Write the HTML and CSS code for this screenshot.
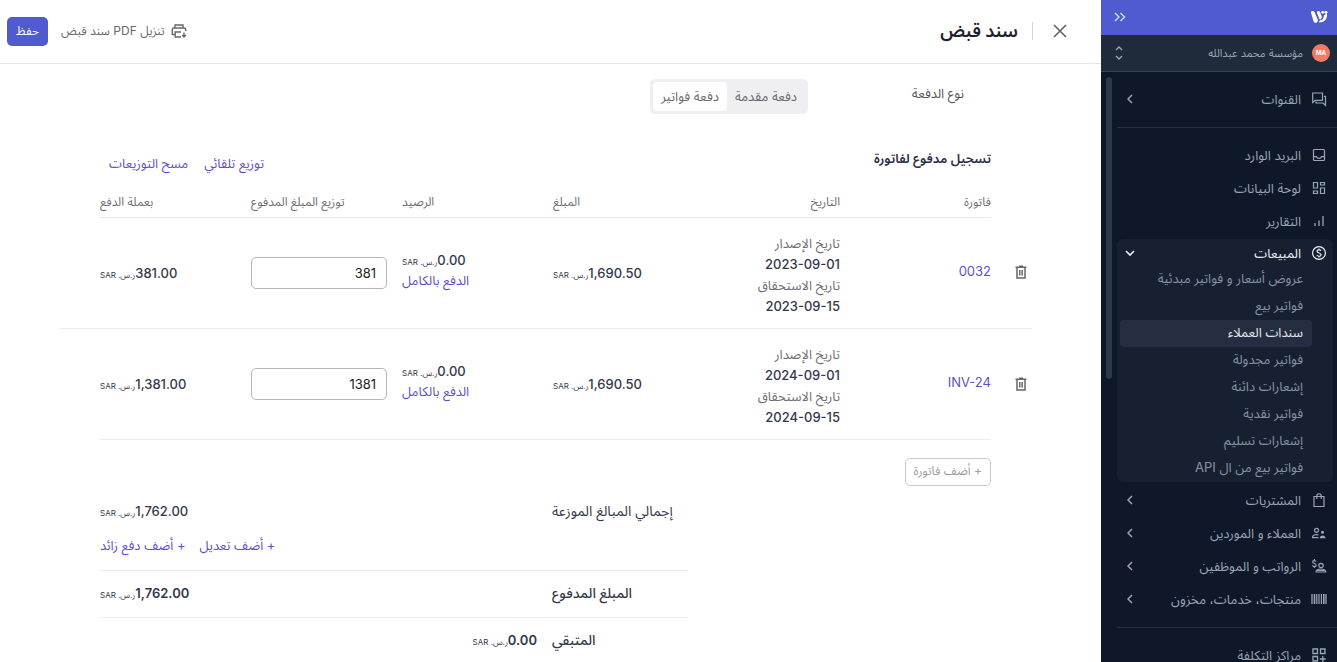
FILE: index.html
```html
<!DOCTYPE html>
<html lang="ar" dir="rtl">
<head>
<meta charset="utf-8">
<meta name="viewport" content="width=device-width, initial-scale=1">
<title>سند قبض</title>
<link rel="stylesheet" href="styles.css">
</head>
<body>
<div class="app">
  <aside class="sidebar">
    <div class="brand">
      <svg class="logo" viewBox="0 0 18 14" width="18" height="14" aria-label="شعار"><path fill="#fff" d="M.8 2.200C1.500.6 3.800.5 4.600 2.200L7.600 9.200C8.200 11 7.300 12.800 5.600 12.900C4.400 12.900 3.900 12 3.500 11zM6.800 2.200C7.500.6 9.400.6 10.100 2.200L12 7.200L10.400 9.400C9.700 9.400 9.400 9 9.200 8.400zM8.600 11.900L10.200 10.200C13 10.300 13.900 7.500 13.800 5.500L17 3.200C17.600 8.500 14.500 13.400 8.600 11.900z"/><circle cx="12.700" cy="2.300" r="1.400" fill="#fff"/><circle cx="15.900" cy="2.300" r="1.500" fill="#fff"/></svg>
      <button class="icon-btn" type="button" aria-label="طي القائمة"><svg class="ic" viewBox="0 0 12 10" width="12" height="10"><path d="M1 1l4 4-4 4M6.500 1l4 4-4 4" stroke-width="1.400"/></svg></button>
    </div>
    <button class="company" type="button">
      <span class="avatar">MA</span>
      <span class="company-name">مؤسسة محمد عبدالله</span>
      <svg class="ic" viewBox="0 0 8 14" width="8" height="14"><path d="M1 4l3-3 3 3M1 10l3 3 3-3" stroke-width="1.400"/></svg>
    </button>
    <nav class="nav">
      <span class="scroll-thumb"></span>
      <a class="item" href="#"><svg class="ic" viewBox="0 0 16 16" width="16" height="16"><path d="M1.700 2h9.800v7.300H4.200L1.700 11.500zM13 5.300h1.500v9L12 12H5v-1.500"/></svg><span>القنوات</span><svg class="ic chev" viewBox="0 0 6 10" width="6" height="10"><path d="M5 1L1 5l4 4"/></svg></a>
      <hr>
      <a class="item" href="#"><svg class="ic" viewBox="0 0 16 16" width="16" height="16"><rect x="2.500" y="2.500" width="11" height="11" rx="1"/><path d="M2.500 9.700h3c.5 2.300 4.500 2.300 5 0h3"/></svg><span>البريد الوارد</span></a>
      <a class="item" href="#"><svg class="ic" viewBox="0 0 16 16" width="16" height="16"><path d="M2.500 2.500h4v5.500h-4zM9.500 2.500h4v2.500h-4zM2.500 11h4v2.500h-4zM9.500 8h4v5.500h-4z"/></svg><span>لوحة البيانات</span></a>
      <a class="item" href="#"><svg class="ic" viewBox="0 0 16 16" width="16" height="16"><path d="M4 10v3M8 7.500V13M12 3v10" stroke-width="1.300"/></svg><span>التقارير</span></a>
      <div class="group">
        <a class="item open" href="#"><svg class="ic" viewBox="0 0 16 16" width="16" height="16"><circle cx="8" cy="8" r="6.400"/><path d="M10 5.900C9.500 4.400 6 4.400 6 6.300c0 2.200 4.100 1.200 4.100 3.500C10.100 11.800 6.300 11.700 6 10M8 3.500v1.200M8 11.300v1.200"/></svg><span>المبيعات</span><svg class="ic chev" viewBox="0 0 10 6" width="10" height="6"><path d="M1 1l4 4 4-4" stroke-width="1.700"/></svg></a>
        <a class="sub" href="#">عروض أسعار و فواتير مبدئية</a>
        <a class="sub" href="#">فواتير بيع</a>
        <a class="sub active" href="#">سندات العملاء</a>
        <a class="sub" href="#">فواتير مجدولة</a>
        <a class="sub" href="#">إشعارات دائنة</a>
        <a class="sub" href="#">فواتير نقدية</a>
        <a class="sub" href="#">إشعارات تسليم</a>
        <a class="sub" href="#">فواتير بيع من ال API</a>
      </div>
      <a class="item" href="#"><svg class="ic" viewBox="0 0 16 16" width="16" height="16"><path d="M3 4.500h10v10H3zM5.800 7V4c0-3 4.400-3 4.400 0v3"/></svg><span>المشتريات</span><svg class="ic chev" viewBox="0 0 6 10" width="6" height="10"><path d="M5 1L1 5l4 4"/></svg></a>
      <a class="item" href="#"><svg class="ic" viewBox="0 0 16 16" width="16" height="16"><circle cx="5.500" cy="5.300" r="2"/><path d="M7.500 12.700h-6c0-3.600 4.500-3.500 6-2.600"/><circle cx="11.500" cy="7.300" r="1.500" class="fill"/><path class="fill" d="M8.700 13.200c0-3.600 5.800-3.600 5.800 0z"/></svg><span>العملاء و الموردين</span><svg class="ic chev" viewBox="0 0 6 10" width="6" height="10"><path d="M5 1L1 5l4 4"/></svg></a>
      <a class="item" href="#"><svg class="ic" viewBox="0 0 16 16" width="16" height="16"><path d="M5 3.700C4.500 2 1.700 2.200 1.700 4c0 1.900 3.500 1.200 3.500 3.200C5.200 9 1.900 9 1.500 7.300M3.400 1v1.300M3.400 8.600V10"/><circle cx="10" cy="7.500" r="2.200"/><path d="M5 14c0-4 9.800-4 9.800 0zM6 12.500h8"/></svg><span>الرواتب و الموظفين</span><svg class="ic chev" viewBox="0 0 6 10" width="6" height="10"><path d="M5 1L1 5l4 4"/></svg></a>
      <a class="item" href="#"><svg class="ic" viewBox="0 0 16 16" width="16" height="16"><path d="M1 3v10M15 3v10" stroke-width="1.300"/><path d="M3.500 3v10M12.800 3v10" stroke-width="1.600"/><path d="M5.800 3v10M8 3v10M10.400 3v10"/></svg><span>منتجات، خدمات، مخزون</span><svg class="ic chev" viewBox="0 0 6 10" width="6" height="10"><path d="M5 1L1 5l4 4"/></svg></a>
      <hr>
      <a class="item" href="#"><svg class="ic" viewBox="0 0 16 16" width="16" height="16"><path d="M2 2h4.500v4.500H2zM9.500 2H14v4.500H9.500zM2 9.500h4.500V14H2zM11.800 9v6M8.800 12h6" stroke-width="1.300"/></svg><span>مراكز التكلفة</span></a>
    </nav>
  </aside>

  <main class="main">
    <header class="topbar">
      <button class="icon-btn close" type="button" aria-label="إغلاق"><svg class="ic" viewBox="0 0 14 14" width="14" height="14"><path d="M1 1l12 12M13 1L1 13" stroke-width="1.700"/></svg></button>
      <h1>سند قبض</h1>
      <div class="actions">
        <button class="print" type="button"><svg class="ic" viewBox="0 0 16 14" width="16" height="14"><path d="M4 4V1h8v3M4 10.500H1.300V5.500q0-1.500 1.500-1.500h10.400q1.500 0 1.500 1.500V7M10 8H4.200v5H10M13 8.500v4M11.200 11l1.800 2 1.800-2" stroke-width="1.400"/></svg>تنزيل PDF سند قبض</button>
        <button class="save" type="button">حفظ</button>
      </div>
    </header>

    <div class="content">
      <div class="type-row">
        <span class="type-label" id="type-label">نوع الدفعة</span>
        <div class="segmented" role="group" aria-labelledby="type-label">
          <button type="button">دفعة مقدمة</button>
          <button class="on" type="button">دفعة فواتير</button>
        </div>
      </div>

      <div class="section-head">
        <h2>تسجيل مدفوع لفاتورة</h2>
        <div class="links"><a href="#">توزيع تلقائي</a><a href="#">مسح التوزيعات</a></div>
      </div>

      <table class="invoices">
        <colgroup><col class="c-del"><col><col><col><col><col><col class="c-pay"><col class="c-end"></colgroup>
        <thead>
          <tr><td></td><th>فاتورة</th><th>التاريخ</th><th class="num">المبلغ</th><th class="num">الرصيد</th><th class="num">توزيع المبلغ المدفوع</th><th class="num last">بعملة الدفع</th><td></td></tr>
        </thead>
        <tbody>
          <tr class="full">
            <td><button class="icon-btn trash" type="button" aria-label="حذف"><svg class="ic" viewBox="0 0 12 14" width="12" height="14"><path d="M.5 2.200h11M4 1.200h4M2 2.500V13h8V2.500M4.800 5v5.500M7.200 5v5.500" stroke-width="1.500"/></svg></button></td>
            <td class="doc"><a href="#">0032</a></td>
            <td class="dates"><span>تاريخ الإصدار</span><b>2023-09-01</b><span>تاريخ الاستحقاق</span><b>2023-09-15</b></td>
            <td class="num"><span class="money">1,690.50<small>ر.س. SAR</small></span></td>
            <td class="num balance"><span class="money">0.00<small>ر.س. SAR</small></span><a href="#">الدفع بالكامل</a></td>
            <td class="num"><input type="text" value="381" aria-label="المبلغ المدفوع للفاتورة 0032"></td>
            <td class="num last"><span class="money">381.00<small>ر.س. SAR</small></span></td>
            <td></td>
          </tr>
          <tr>
            <td><button class="icon-btn trash" type="button" aria-label="حذف"><svg class="ic" viewBox="0 0 12 14" width="12" height="14"><path d="M.5 2.200h11M4 1.200h4M2 2.500V13h8V2.500M4.800 5v5.500M7.200 5v5.500" stroke-width="1.500"/></svg></button></td>
            <td class="doc"><a href="#">INV-24</a></td>
            <td class="dates"><span>تاريخ الإصدار</span><b>2024-09-01</b><span>تاريخ الاستحقاق</span><b>2024-09-15</b></td>
            <td class="num"><span class="money">1,690.50<small>ر.س. SAR</small></span></td>
            <td class="num balance"><span class="money">0.00<small>ر.س. SAR</small></span><a href="#">الدفع بالكامل</a></td>
            <td class="num"><input type="text" value="1381" aria-label="المبلغ المدفوع للفاتورة INV-24"></td>
            <td class="num last"><span class="money">1,381.00<small>ر.س. SAR</small></span></td>
            <td></td>
          </tr>
        </tbody>
      </table>

      <button class="add" type="button">+ أضف فاتورة</button>

      <section class="totals">
        <div class="total first"><span class="t-label">إجمالي المبالغ الموزعة</span><span class="money">1,762.00<small>ر.س. SAR</small></span></div>
        <div class="adjust"><a href="#">+ أضف تعديل</a><a href="#">+ أضف دفع زائد</a></div>
        <div class="total strong"><span class="t-label">المبلغ المدفوع</span><span class="money">1,762.00<small>ر.س. SAR</small></span></div>
        <div class="total strong rest"><span class="t-label">المتبقي</span><span class="money">0.00<small>ر.س. SAR</small></span></div>
      </section>
    </div>
  </main>
</div>
</body>
</html>
```
FILE: styles.css
```css
* { box-sizing: border-box; }
body {
  margin: 0;
  font-family: Inter, "Noto Sans Arabic", "Noto Sans", "DejaVu Sans", sans-serif;
  font-size: 13px;
  line-height: 20px;
  color: #35384b;
  background: #fff;
}
a { color: #5e4fc9; text-decoration: none; }
button { font: inherit; color: inherit; background: none; border: 0; padding: 0; cursor: pointer; }
h1, h2 { margin: 0; }
.app { display: flex; height: 100vh; overflow: hidden; }
.ic { fill: none; stroke: currentColor; stroke-width: 1.2; flex: none; display: block; }
.ic .fill { fill: currentColor; stroke: none; }
.icon-btn { display: flex; }

.sidebar { width: 236px; flex: none; display: flex; flex-direction: column; background: #0f1828; color: #9aa5b5; }
.brand { height: 35px; flex: none; display: flex; align-items: center; justify-content: space-between; padding: 0 9px 1px 13px; background: #505bd0; color: #d6daf8; }
.company { height: 37px; flex: none; display: flex; align-items: center; gap: 9px; padding: 0 7px 0 14px; background: #1f2a3b; border-bottom: 1px solid #374252; font-size: 11px; }
.company-name { flex: 1; text-align: right; }
.avatar { width: 18px; height: 18px; border-radius: 50%; background: #f27a69; color: #fff; font-size: 6px; font-weight: 700; line-height: 18px; text-align: center; }
.nav { position: relative; flex: 1; min-height: 0; overflow: hidden; padding: 10px 4px 0 16px; }
.scroll-thumb { position: absolute; left: 5px; top: 5px; width: 6px; height: 302px; border-radius: 3px; background: #2d3849; }
.nav hr { height: 1px; border: 0; margin: 12px -4px 10px 0; background: #253041; }
.item { display: flex; align-items: center; gap: 10px; height: 33px; padding: 0 6px 0 10px; color: #9aa5b5; line-height: 18px; }
.item span { flex: 1; }
.item .chev { stroke-width: 1.5; }
.item.open { height: 27px; padding-left: 8px; color: #eef1f6; }
.group { margin: 2px 0 1px; border-radius: 6px; background: #172031; }
.sub { display: block; height: 27px; line-height: 25px; margin: 0 21px 0 3px; padding: 0 9px; border-radius: 4px; color: #8793a5; }
.sub.active { background: #242e40; color: #e4e8ef; }

.main { flex: 1; min-width: 0; overflow: hidden; }
.topbar { height: 64px; display: flex; align-items: center; padding: 0 34px 1px 7px; border-bottom: 1px solid #e4e4e7; }
.close { color: #666; padding-left: 20px; border-left: 1px solid #d4d4d8; height: 18px; align-items: center; padding-right: 0; }
h1 { margin-right: 14px; font-size: 18px; font-weight: 600; line-height: 30px; color: #1d1f2c; }
.actions { margin-right: auto; display: flex; align-items: center; gap: 13px; font-size: 12px; }
.print { display: flex; align-items: center; gap: 6px; color: #68686c; }
.save { height: 29px; padding: 0 9px; border-radius: 5px; background: #505bd0; color: #fff; }

.content { padding: 15px 69px 0 60px; }
.type-row { display: flex; height: 35px; padding-right: 68px; color: #55555b; }
.type-label { width: 156px; padding-top: 4px; }
.segmented { display: flex; padding: 3px; border-radius: 5px; background: #efeff1; }
.segmented button { padding: 0 8px 2px; border-radius: 4px; color: #68686c; }
.segmented .on { background: #fff; }
.section-head { display: flex; justify-content: space-between; padding: 34px 41px 0 49px; }
h2 { font-size: 13px; font-weight: 600; line-height: 20px; color: #2c2e43; }
.links { display: flex; gap: 16px; padding-top: 5px; }

.invoices { width: 100%; table-layout: fixed; border-collapse: collapse; margin-top: 20px; }
.c-del { width: 41px; }
.c-pay { width: 14%; }
.c-end { width: 40px; }
th { height: 24px; padding: 0 0 5px; border-bottom: 1px solid #e8e8ea; font-size: 12px; font-weight: 400; line-height: 18px; text-align: right; color: #6d6d72; }
td { padding: 0; }
tbody td { height: 111px; }
.full td, tbody td:not(:first-child):not(:last-child) { border-bottom: 1px solid #ededef; }
.num { padding-left: 15px; text-align: left; }
.num.last { padding-left: 0; }
.trash { margin-right: 5px; color: #66666a; }
.doc { padding-bottom: 3px; }
.dates { padding: 15px 0 11px; line-height: 21px; }
.dates span, .dates b { display: block; }
.dates span { color: #6d6d72; }
.dates b { font-weight: 500; direction: ltr; text-align: right; }
.money { display: flex; align-items: baseline; justify-content: flex-end; font-weight: 500; }
.money small { font-size: 8px; line-height: 10px; font-weight: 400; }
.balance { padding-bottom: 6px; }
.balance a { display: block; }
input { width: 100%; height: 32px; padding: 0 10px; border: 1px solid #b5b5ba; border-radius: 5px; background: #fff; color: #222; font: inherit; text-align: right; }

.add { display: block; margin: 18px 41px 0 0; height: 28px; padding: 0 8px 2px; border: 1px solid #c9c9cd; border-radius: 5px; color: #9b9ba0; font-size: 12px; }
.totals { margin: 15px 344px 0 40px; }
.total { display: flex; align-items: center; justify-content: space-between; }
.t-label { width: 151px; padding-left: 15px; text-align: left; font-size: 14px; }
.adjust { display: flex; justify-content: flex-end; gap: 14px; margin-top: 14px; padding-bottom: 15px; border-bottom: 1px solid #ededef; }
.strong { padding: 12px 0 14px; border-bottom: 1px solid #ededef; }
.strong .t-label { font-weight: 500; }
.strong .money { font-weight: 600; }
.rest { justify-content: flex-start; border-bottom: 0; }
```
